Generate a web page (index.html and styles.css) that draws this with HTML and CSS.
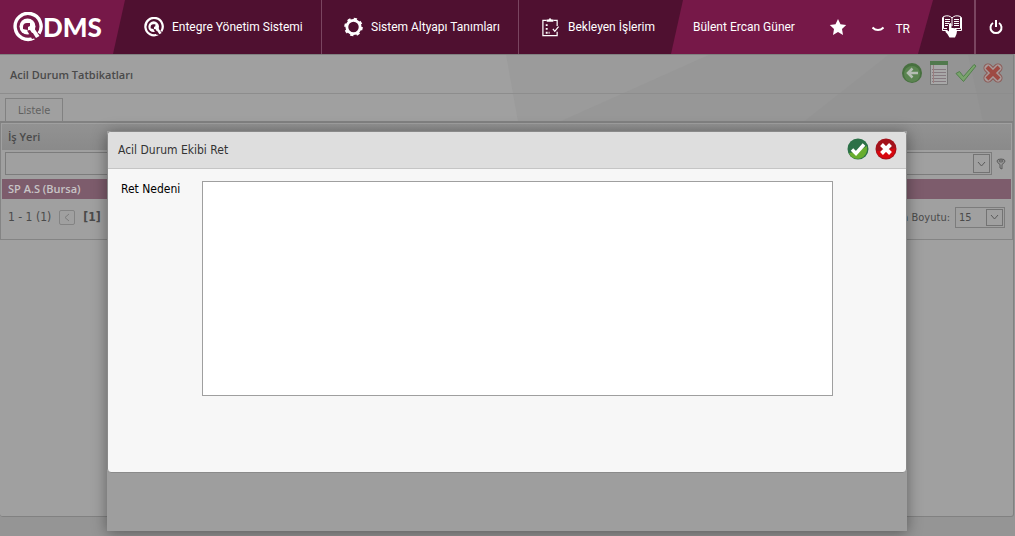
FILE: index.html
```html
<!DOCTYPE html>
<html lang="tr">
  <head>
    <meta charset="UTF-8" />
    <meta name="viewport" content="width=device-width, initial-scale=1.0" />
    <title>QDMS - Acil Durum Tatbikatları</title>
    <link rel="stylesheet" href="styles.css">
  </head>
  <body>
    <header class="topbar">
      <a href="#" class="logo" aria-label="QDMS">
        <svg width="30" height="30" viewBox="0 0 30 30">
          <path d="M21 26A13 13 0 1 1 26 21.500" fill="none" stroke="#fff" stroke-width="3.400" />
          <circle cx="14.500" cy="14.500" r="8" fill="#fff" />
          <path d="M10 17V15Q10 11 14 11H17V14L15 15V18L12 17.500Z" fill="#7a1849" />
          <path d="M14 18.500L17 18L22.500 26L19 27Z" fill="#7a1849" />
          <path d="M17 16.500L21 16L26.500 24L23 26Z" fill="#fff" />
        </svg>
        <span>DMS</span>
      </a>

      <nav class="menu">
        <a href="#" class="menu-item first">
          <svg width="20" height="20" viewBox="0 0 30 30">
            <path d="M21 26A13 13 0 1 1 26 21.500" fill="none" stroke="#fff" stroke-width="3.400" />
            <circle cx="14.500" cy="14.500" r="8" fill="#fff" />
            <path d="M10 17V15Q10 11 14 11H17V14L15 15V18L12 17.500Z" fill="#4f1030" />
            <path d="M14 18.500L17 18L22.500 26L19 27Z" fill="#4f1030" />
            <path d="M17 16.500L21 16L26.500 24L23 26Z" fill="#fff" />
          </svg>
          Entegre Yönetim Sistemi
        </a>
        <a href="#" class="menu-item second">
          <svg width="19" height="20" viewBox="0 0 20 20" fill="none" stroke="#fff">
            <circle cx="10" cy="10" r="7" stroke-width="3" />
            <circle cx="10" cy="10" r="8.600" stroke-width="2.400" stroke-dasharray="3.400 3.355" />
          </svg>
          Sistem Altyapı Tanımları
        </a>
        <a href="#" class="menu-item third">
          <svg width="19" height="20" viewBox="0 0 20 20" fill="none" stroke="#fff" stroke-width="1.300">
            <path d="M6 3H2V19H17V15M13 3H17V9" />
            <path d="M6 4.500V2H8Q9.500-.5 11 2H13V4.500Z" fill="#fff" stroke="none" />
            <path d="M5 8h2M5 12h2M5 16h2M8 16h1" stroke-width="2" />
            <path d="M12.500 12l2 2.500L18.500 9.500" />
          </svg>
          Bekleyen İşlerim
        </a>
      </nav>

      <div class="user">
        <span class="user-name">Bülent Ercan Güner</span>
        <button type="button" class="plain" aria-label="Favoriler">
          <svg width="18" height="18" viewBox="0 0 18 18">
            <path d="M9 1l2.500 5.300 5.700.8-4.200 4 1 5.800L9 14.100l-5 2.800 1-5.800-4.200-4 5.700-.8Z" fill="#fff" />
          </svg>
        </button>
        <button type="button" class="plain language">
          <svg width="12" height="6" viewBox="0 0 12 6" fill="none" stroke="#fff" stroke-width="2">
            <path d="M.5 1.500Q3 4 6 4T11.500 1.500" />
          </svg>
          TR
        </button>
      </div>

      <div class="tools">
        <button type="button" class="plain help" aria-label="Yardım">
          <svg width="22" height="24" viewBox="0 0 22 24" fill="none" stroke="#fff">
            <path d="M6 15.500H1.500V2.500H2.500V1.500Q8-.5 11 3Q14-.5 19.500 1.500V2.500H20.500V15.500H15M11 3V11M2.500 2.500V13.500H6M19.500 2.500V13.500H14" />
            <path d="M4 4.500h5M4 6.500h5M4 8.500h4M4 10.500h3M13 4.500h5M13 6.500h5M13 8.500h5M13 10.500h5" />
            <path d="M8 9Q9.500 7 10.500 9.500V13Q16 12.500 16 16Q16 19 14 22.500H8.500Q7 19 4.500 17Q4 15.500 6 15L8 16.500Z" fill="#fff" stroke="none" />
          </svg>
        </button>
        <button type="button" class="plain power" aria-label="Çıkış">
          <svg width="14" height="16" viewBox="0 0 14 16" fill="none" stroke="#fff" stroke-width="2">
            <path d="M4 4A5.500 5.500 0 1 0 10 4M7 1V8" />
          </svg>
        </button>
      </div>
    </header>

    <main class="page">
      <svg class="backdrop" viewBox="0 0 1015 70" preserveAspectRatio="none">
        <path d="M507 0H1015V70H519Z" fill="#9b9b9b" />
        <path d="M710 0H1015V70H560Z" fill="#979797" />
        <path d="M890 0H970L1015 70H805Z" fill="#949494" />
        <path d="M970 0H1015V70H985Z" fill="#919191" />
      </svg>

      <div class="title-bar">
        <h1>Acil Durum Tatbikatları</h1>
        <div class="actions">
          <button type="button" class="plain" aria-label="Geri">
            <svg width="22" height="24" viewBox="0 0 22 24">
              <circle cx="11" cy="12" r="10" fill="#47703f" />
              <circle cx="11" cy="13" r="8" fill="#5a8450" />
              <path d="M17 12H8M11.500 7.500L7 12l4.500 4.500" fill="none" stroke="#b4bcb2" stroke-width="2.500" />
            </svg>
          </button>
          <button type="button" class="plain" aria-label="Liste">
            <svg width="20" height="24" viewBox="0 0 20 24">
              <path d="M1.500 1.500H18.500V23.500H1.500Z" fill="#a8a8a8" stroke="#777" />
              <path d="M1 0H19V4H1Z" fill="#51794d" />
              <path d="M3 8.500h14M3 11.500h14M3 14.500h14M3 17.500h14M3 20.500h14" stroke="#857a80" />
              <path d="M4.500 4V22" stroke="#9c7f7f" />
            </svg>
          </button>
          <button type="button" class="plain" aria-label="Onayla">
            <svg width="22" height="20" viewBox="0 0 22 20">
              <path d="M1 10.500l3.500-2 4 5L19 1.500l2 1.500L8.500 18.500Z" fill="#79a36c" stroke="#517f4b" />
            </svg>
          </button>
          <button type="button" class="plain" aria-label="Kapat">
            <svg width="20" height="20" viewBox="0 0 20 20" fill="none" stroke-linecap="round">
              <path d="M5 5l10 10M15 5L5 15" stroke="#8c5753" stroke-width="9" />
              <path d="M5 5l10 10M15 5L5 15" stroke="#a89b9a" stroke-width="7" />
              <path d="M4 4l12 12M16 4L4 16" stroke="#9e4a43" stroke-width="4" stroke-linecap="butt" />
            </svg>
          </button>
        </div>
      </div>

      <div class="tabs">
        <a href="#" class="tab">Listele</a>
      </div>

      <section class="panel">
        <div class="grid">
          <div class="grid-head"><label for="workplace">İş Yeri</label></div>
          <div class="filter-row">
            <div class="combo">
              <input type="text" id="workplace" />
              <button type="button" class="arrow" aria-label="Aç">
                <svg width="9" height="6" viewBox="0 0 9 6"><path d="M1 1l3.500 4L8 1" /></svg>
              </button>
            </div>
            <button type="button" class="plain" aria-label="Filtre">
              <svg width="10" height="12" viewBox="0 0 10 12" fill="#999" stroke="#5c5c5c">
                <path d="M1 3Q1 1 5 1Q9 1 9 3Q9 4.500 6 6.500V11L4 10V6.500Q1 4.500 1 3Z" />
                <ellipse cx="5" cy="3" rx="2" ry="1" />
              </svg>
            </button>
          </div>
          <div class="grid-row">SP A.S (Bursa)</div>
          <div class="pager">
            <span>1 - 1 (1)</span>
            <button type="button" class="prev" aria-label="Önceki" disabled>
              <svg width="6" height="9" viewBox="0 0 6 9"><path d="M5 1L1 4.500 5 8" /></svg>
            </button>
            <b>[1]</b>
            <label class="size-label" for="pageSize">Sayfa Boyutu:</label>
            <div class="size-box">
              <select id="pageSize">
                <option>15</option>
                <option>30</option>
              </select>
              <span class="arrow">
                <svg width="9" height="6" viewBox="0 0 9 6"><path d="M1 1l3.500 4L8 1" /></svg>
              </span>
            </div>
          </div>
        </div>
      </section>
    </main>

    <div class="overlay">
      <div class="dialog" role="dialog" aria-labelledby="dialogTitle">
        <div class="dialog-window">
          <div class="dialog-head">
            <h2 id="dialogTitle">Acil Durum Ekibi Ret</h2>
            <button type="button" class="plain" aria-label="Tamam">
              <svg width="22" height="22" viewBox="0 0 22 22">
                <circle cx="11" cy="11" r="10.500" fill="#2c7148" />
                <path d="M2 15Q11 14 20 8Q21 18 13 20.500Q5 22 2 15Z" fill="#68ad2e" />
                <path d="M5 11.500l4 4L17 6.500" fill="none" stroke="#fff" stroke-width="3.500" />
              </svg>
            </button>
            <button type="button" class="plain" aria-label="İptal">
              <svg width="22" height="22" viewBox="0 0 22 22">
                <circle cx="11" cy="11" r="10.500" fill="#a3121b" />
                <path d="M1.500 13Q11 13 20.500 10Q20 20 11 20.500Q3 20 1.500 13Z" fill="#d8070e" />
                <path d="M6.500 6.500l9 9M15.500 6.500l-9 9" fill="none" stroke="#fff" stroke-width="4" />
              </svg>
            </button>
          </div>
          <div class="dialog-body">
            <label for="reason">Ret Nedeni</label>
            <textarea id="reason"></textarea>
          </div>
        </div>
      </div>
    </div>
  </body>
</html>
```
FILE: styles.css
```css
* {
  box-sizing: border-box;
}
body {
  display: flex;
  flex-direction: column;
  min-height: 100vh;
  margin: 0;
  background-color: #959595;
  color: #4a4a4a;
  font-family: Tahoma, "DejaVu Sans Condensed", sans-serif;
  font-size: 11px;
}
a {
  color: inherit;
  text-decoration: none;
}
svg {
  display: block;
  flex: none;
}
h1,
h2 {
  margin: 0;
}
button,
input,
select,
textarea {
  font: inherit;
  color: inherit;
}
.plain {
  padding: 0;
  border: none;
  background: none;
  cursor: pointer;
}

/* Top bar */
.topbar {
  display: flex;
  height: 54px;
  background-color: #761848;
  color: #fff;
  font-family: Roboto, sans-serif;
  font-size: 12px;
}
.logo {
  display: flex;
  align-items: center;
  width: 113px;
  padding-left: 13px;
  font-family: Lato, sans-serif;
  font-size: 26px;
  font-weight: 900;
}
.menu {
  display: flex;
  background-color: #4f1030;
  clip-path: polygon(12px 0, 100% 0, calc(100% - 12px) 100%, 0 100%);
}
.menu-item {
  display: flex;
  align-items: center;
  gap: 8px;
  padding-left: 22px;
  border-right: 1px solid #7a4560;
  white-space: nowrap;
}
.first {
  width: 209px;
  padding-left: 31px;
}
.second {
  width: 197px;
}
.third {
  width: 164px;
  border-right: none;
}
.user {
  display: flex;
  flex: 1;
  align-items: center;
  padding: 0 8px 0 10px;
}
.user-name {
  flex: 1;
  white-space: nowrap;
}
.language {
  display: flex;
  align-items: center;
  gap: 11px;
  padding: 4px 0 0 25px;
}
.tools {
  display: flex;
  width: 97px;
  background-color: #4f1030;
  clip-path: polygon(15px 0, 100% 0, 100% 100%, 0 100%);
}
.help {
  display: flex;
  flex: 1;
  align-items: center;
  padding-left: 23px;
  border-right: 2px solid #7a4560;
}
.power {
  display: flex;
  align-items: center;
  justify-content: center;
  width: 39px;
}

/* Page */
.page {
  position: relative;
  display: flex;
  flex: 1;
  flex-direction: column;
  margin: 0 1px 19px 0;
  border: 1px solid #818181;
  border-width: 1px 1px 1px 0;
  border-radius: 0 0 3px 3px;
  background-color: #a0a0a0;
}
.backdrop {
  position: absolute;
  top: 0;
  left: 0;
  width: 100%;
  height: 67px;
}
.title-bar {
  position: relative;
  display: flex;
  align-items: center;
  justify-content: space-between;
  height: 39px;
  padding: 0 10px 2px;
  border-bottom: 1px solid #8d8d8d;
}
.title-bar h1,
.grid-head,
.grid-row {
  font-family: "Open Sans", sans-serif;
  font-size: 11px;
  font-weight: 600;
}
.title-bar h1 {
  padding-top: 2px;
}
.actions {
  display: flex;
  align-items: center;
  gap: 6px;
}
.tabs {
  position: relative;
  display: flex;
  padding: 4px 5px 0;
}
.tab {
  height: 23px;
  padding: 0 12px;
  border: 1px solid #818181;
  border-bottom: none;
  background-color: #a0a0a0;
  color: #606060;
  line-height: 23px;
}
.panel {
  position: relative;
  flex: 1;
  border-top: 2px solid #818181;
}
.grid {
  padding: 1px 1px 0;
  border: 1px solid #848484;
  border-top: none;
}
.grid-head {
  height: 26px;
  padding-left: 6px;
  background: linear-gradient(#929292, #8a8a8a);
  line-height: 26px;
}
.filter-row {
  display: flex;
  align-items: center;
  gap: 4px;
  height: 29px;
  padding: 0 5px 2px 3px;
}
.combo,
.size-box {
  display: flex;
  align-items: center;
  border: 1px solid #7c7c7c;
  background-color: #a0a0a0;
}
.combo {
  flex: 1;
  height: 23px;
  padding-right: 1px;
}
.combo input {
  flex: 1;
  min-width: 0;
  border: none;
  background: none;
}
.arrow {
  display: flex;
  align-items: center;
  justify-content: center;
  width: 17px;
  height: 19px;
  padding: 0;
  border: 1px solid #737373;
  background-color: #a0a0a0;
}
.arrow path,
.prev path {
  fill: none;
  stroke: #5a5a5a;
}
.prev path {
  stroke: #7c7c7c;
}
.grid-row {
  height: 20px;
  padding-left: 6px;
  background-color: #7d5c6c;
  color: #c8c4c6;
  line-height: 20px;
}
.pager {
  display: flex;
  align-items: center;
  height: 40px;
  padding: 0 6px 4px;
  font-size: 12px;
  white-space: nowrap;
}
.prev {
  display: flex;
  align-items: center;
  justify-content: center;
  width: 16px;
  height: 15px;
  margin: 0 8px;
  padding: 0;
  border: 1px solid #838383;
  border-radius: 2px;
  background: none;
}
.size-label {
  margin-left: auto;
  font-size: 11px;
}
.size-box {
  width: 50px;
  height: 21px;
  margin-left: 5px;
  padding-right: 1px;
}
.size-box select {
  flex: 1;
  min-width: 0;
  padding: 0 3px;
  border: none;
  background: none;
  appearance: none;
  font-size: 11px;
}
.size-box .arrow {
  height: 17px;
}

/* Dialog */
.overlay {
  position: absolute;
  top: 131px;
  right: 108px;
  left: 107px;
}
.dialog {
  padding-bottom: 58px;
  background-color: #9e9e9e;
  box-shadow: 0 2px 14px rgba(0, 0, 0, 0.4);
}
.dialog-window {
  overflow: hidden;
  border: 1px solid #8a8a8a;
  border-radius: 4px;
  background-color: #f7f7f7;
}
.dialog-head {
  display: flex;
  align-items: center;
  gap: 6px;
  height: 37px;
  padding: 0 9px 2px 10px;
  border-bottom: 1px solid #c5c5c5;
  background-color: #dedede;
}
.dialog-head h2 {
  flex: 1;
  padding-top: 2px;
  color: #333;
  font-size: 12px;
  font-weight: normal;
}
.dialog-body {
  display: flex;
  min-height: 303px;
  padding: 12px 73px 0 13px;
  color: #000;
}
.dialog-body label {
  width: 81px;
  font-size: 12px;
  line-height: 16px;
}
.dialog-body textarea {
  flex: 1;
  height: 215px;
  border: 1px solid #9f9f9f;
  background-color: #fff;
  resize: none;
}
```
